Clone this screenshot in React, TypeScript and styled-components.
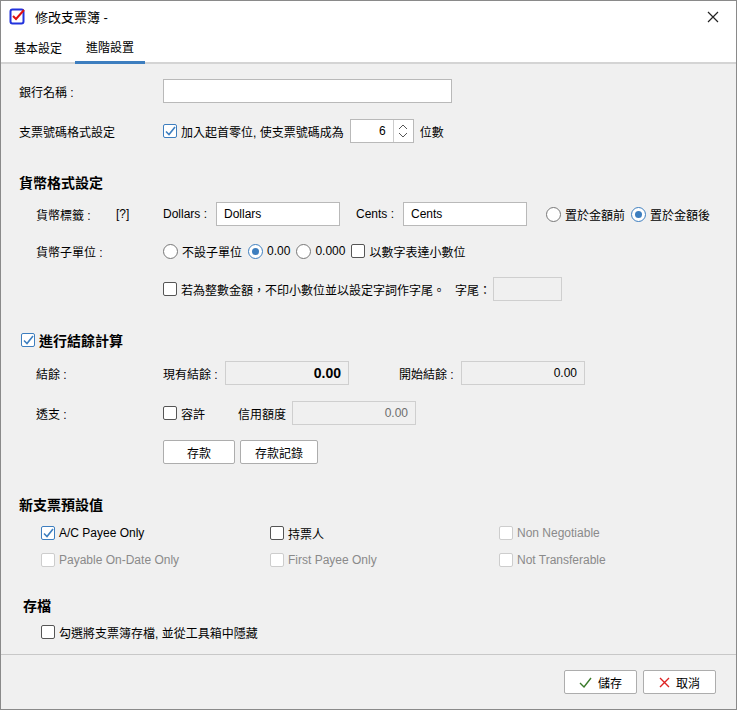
import React from "react";
import styled, { createGlobalStyle, css } from "styled-components";

const G = createGlobalStyle`
  html,body{margin:0;padding:0;background:#fff;}
  body{font-family:"Liberation Sans","Noto Sans CJK TC",sans-serif;font-size:12px;color:#000;}
  *{box-sizing:border-box;}
`;

const Win = styled.div`width:737px;height:710px;border:1px solid #8a8a8a;display:flex;flex-direction:column;background:#f0f0f0;`;
const Title = styled.div`height:31px;background:#fff;display:flex;align-items:center;padding:0 0 0 8px;gap:9px;font-size:13px;`;
const Close = styled.div`margin-left:auto;width:46px;height:31px;display:flex;align-items:center;justify-content:center;`;
const Tabs = styled.div`height:32px;background:#fff;display:flex;border-bottom:2px solid #d4d4d4;padding-left:2px;`;
const Tab = styled.div<{ $a?: boolean }>`padding:0 11px;display:flex;align-items:center;font-size:12px;
  ${p => p.$a && css`border-bottom:3px solid #3d7ebf;margin-bottom:-2px;margin-left:2px;`}`;
const Panel = styled.div`flex:1;border-bottom:1px solid #c8c8c8;padding:14px 0 0 0;display:flex;flex-direction:column;`;
const Row = styled.div<{ $h: number; $pl?: number; $mt?: number; $gap?: number }>`height:${p => p.$h}px;display:flex;align-items:center;
  padding-left:${p => p.$pl ?? 18}px;margin-top:${p => p.$mt ?? 0}px;gap:${p => p.$gap ?? 0}px;`;
const Label = styled.div<{ $w: number; $ml?: number }>`width:${p => p.$w}px;margin-left:${p => p.$ml ?? 0}px;flex-shrink:0;`;
const Group = styled.div<{ $ml?: number }>`display:flex;gap:6px;align-items:center;margin-left:${p => p.$ml ?? 0}px;`;
const Input = styled.div<{ $w: number; $dis?: boolean; $right?: boolean; $bold?: boolean; $dark?: boolean }>`
  width:${p => p.$w}px;height:24px;border:1px solid ${p => p.$dis ? "#cfcfcf" : "#b9b9b9"};
  background:${p => p.$dis ? "#f0f0f0" : "#fff"};display:flex;align-items:center;padding:0 7px;flex-shrink:0;
  justify-content:${p => p.$right ? "flex-end" : "flex-start"};font-size:${p => p.$bold ? 14 : 12}px;
  font-weight:${p => p.$bold ? 700 : 400};color:${p => p.$dis && !p.$dark ? "#6d6d6d" : "#000"};`;
const Head = styled.div<{ $pl?: number; $mt: number }>`font-family:"Noto Sans CJK TC",serif;font-weight:700;font-size:14px;height:22px;
  padding-left:${p => p.$pl ?? 18}px;margin-top:${p => p.$mt}px;display:flex;align-items:center;gap:4px;`;
const BoxEl = styled.span<{ $dis?: boolean; $on?: boolean }>`width:14px;height:14px;border:1px solid ${p => p.$dis ? "#cdcdcd" : p.$on ? "#3d7ebf" : "#555"};
  border-radius:2px;background:#fff;display:inline-flex;align-items:center;justify-content:center;flex-shrink:0;`;
const Opt = styled.label<{ $dis?: boolean; $w?: number }>`display:inline-flex;align-items:center;gap:4px;color:${p => p.$dis ? "#8a8a8a" : "#000"};
  ${p => p.$w && css`width:${p.$w}px;`}`;
const RadioEl = styled.span<{ $on?: boolean }>`width:15px;height:15px;border-radius:50%;border:1px solid ${p => p.$on ? "#3d7ebf" : "#777"};
  background:#fff;display:inline-flex;align-items:center;justify-content:center;flex-shrink:0;
  &::after{content:"";width:7px;height:7px;border-radius:50%;background:${p => p.$on ? "#3d7ebf" : "transparent"};}`;
const Btn = styled.div<{ $w: number }>`width:${p => p.$w}px;height:24px;border:1px solid #adadad;background:#fff;border-radius:2px;
  display:flex;align-items:center;justify-content:center;gap:6px;font-size:12px;`;
const Footer = styled.div`height:54px;display:flex;align-items:center;justify-content:flex-end;gap:6px;padding-right:20px;`;
const Spin = styled.div`width:64px;height:24px;border:1px solid #b9b9b9;background:#fff;display:flex;margin:0 6px;`;
const SpinVal = styled.div`width:42px;display:flex;align-items:center;justify-content:flex-end;padding-right:7px;`;
const SpinBtn = styled.div`flex:1;border-left:1px solid #ccc;display:flex;align-items:center;justify-content:center;`;

const Check = () => (
  <svg width="11" height="10" viewBox="0 0 11 10"><path d="M1 5.5l3 3L10 1" fill="none" stroke="#3d7ebf" strokeWidth="1.6" /></svg>
);
const CB = ({ on, dis, children, w }: { on?: boolean; dis?: boolean; children?: React.ReactNode; w?: number }) => (
  <Opt $dis={dis} $w={w}><BoxEl $on={on} $dis={dis}>{on && <Check />}</BoxEl>{children}</Opt>
);
const RB = ({ on, children }: { on?: boolean; children: React.ReactNode }) => (
  <Opt><RadioEl $on={on} />{children}</Opt>
);

export default function App() {
  return (
    <Win>
      <G />
      <Title>
        <svg width="17" height="17" viewBox="0 0 17 17">
          <rect x="1.5" y="1.5" width="13" height="14" rx="2" fill="#fff" stroke="#2233dd" strokeWidth="2" />
          <path d="M4 8l3 3 8-9" fill="none" stroke="#e01010" strokeWidth="2" />
        </svg>
        修改支票簿 -
        <Close>
          <svg width="12" height="12" viewBox="0 0 12 12"><path d="M1 1l10 10M11 1L1 11" stroke="#222" strokeWidth="1.2" /></svg>
        </Close>
      </Title>
      <Tabs><Tab>基本設定</Tab><Tab $a>進階設置</Tab></Tabs>
      <Panel>
        <Row $h={26}><Label $w={144}>銀行名稱 :</Label><Input $w={289} /></Row>
        <Row $h={26} $mt={14}>
          <Label $w={144}>支票號碼格式設定</Label>
          <CB on>加入起首零位, 使支票號碼成為</CB>
          <Spin>
            <SpinVal>6</SpinVal>
            <SpinBtn>
              <svg width="10" height="16" viewBox="0 0 10 16"><path d="M1 6l4-4 4 4M1 10l4 4 4-4" fill="none" stroke="#555" /></svg>
            </SpinBtn>
          </Spin>
          位數
        </Row>
        <Head $mt={27}>貨幣格式設定</Head>
        <Row $h={30} $pl={35} $mt={6}>
          <Label $w={80}>貨幣標籤 :</Label><Label $w={47}>[?]</Label>
          <Label $w={53}>Dollars :</Label><Input $w={124}>Dollars</Input>
          <Label $w={47} $ml={16}>Cents :</Label><Input $w={124}>Cents</Input>
          <Group $ml={19}><RB>置於金額前</RB><RB on>置於金額後</RB></Group>
        </Row>
        <Row $h={26} $pl={35} $mt={9}>
          <Label $w={127}>貨幣子單位 :</Label>
          <Group><RB>不設子單位</RB><RB on>0.00</RB><RB>0.000</RB><CB>以數字表達小數位</CB></Group>
        </Row>
        <Row $h={24} $pl={162} $mt={13}>
          <CB>若為整數金額，不印小數位並以設定字詞作字尾。</CB>
          <Label $w={38} $ml={10}>字尾：</Label><Input $w={69} $dis />
        </Row>
        <Head $pl={20} $mt={28}><BoxEl $on><Check /></BoxEl>進行結餘計算</Head>
        <Row $h={26} $pl={35} $mt={9}>
          <Label $w={127}>結餘 :</Label><Label $w={62}>現有結餘 :</Label>
          <Input $w={124} $dis $dark $right $bold>0.00</Input>
          <Label $w={62} $ml={50}>開始結餘 :</Label><Input $w={124} $dis $dark $right>0.00</Input>
        </Row>
        <Row $h={24} $pl={35} $mt={15}>
          <Label $w={127}>透支 :</Label><CB>容許</CB>
          <Label $w={54} $ml={33}>信用額度</Label><Input $w={124} $dis $right>0.00</Input>
        </Row>
        <Row $h={24} $pl={162} $mt={15} $gap={5}><Btn $w={72}>存款</Btn><Btn $w={78}>存款記錄</Btn></Row>
        <Head $mt={29}>新支票預設值</Head>
        <Row $h={22} $pl={40} $mt={7}>
          <CB on w={229}>A/C Payee Only</CB><CB w={229}>持票人</CB><CB dis>Non Negotiable</CB>
        </Row>
        <Row $h={22} $pl={40} $mt={5}>
          <CB dis w={229}>Payable On-Date Only</CB><CB dis w={229}>First Payee Only</CB><CB dis>Not Transferable</CB>
        </Row>
        <Head $pl={22} $mt={23}>存檔</Head>
        <Row $h={22} $pl={40} $mt={5}><CB>勾選將支票簿存檔, 並從工具箱中隱藏</CB></Row>
      </Panel>
      <Footer>
        <Btn $w={73}><svg width="13" height="11" viewBox="0 0 13 11"><path d="M1 6l4 4 7-9" fill="none" stroke="#3a7a2a" strokeWidth="1.4" /></svg>儲存</Btn>
        <Btn $w={73}><svg width="11" height="11" viewBox="0 0 11 11"><path d="M1 1l9 9M10 1l-9 9" stroke="#d22" strokeWidth="1.4" /></svg>取消</Btn>
      </Footer>
    </Win>
  );
}
